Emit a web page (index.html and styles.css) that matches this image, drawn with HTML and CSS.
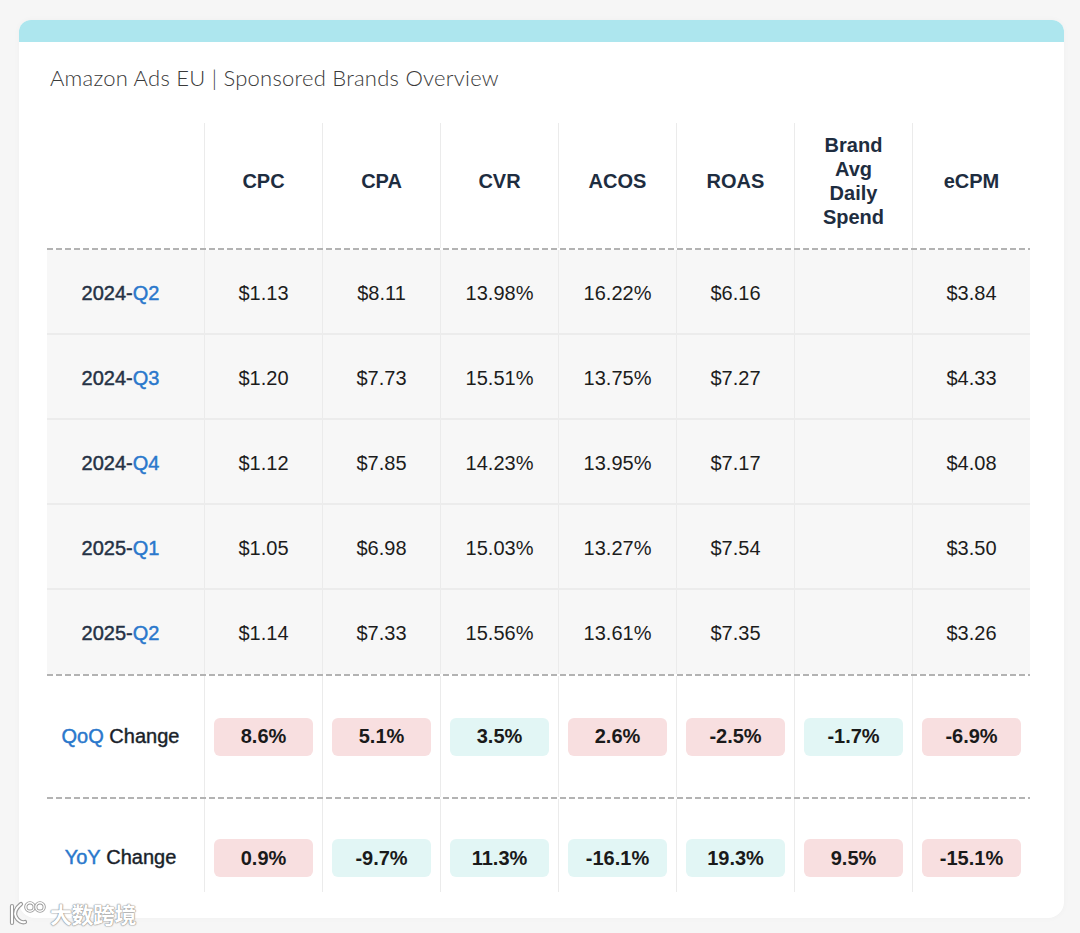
FILE: index.html
```html
<!DOCTYPE html>
<html lang="en">
<head>
<meta charset="utf-8">
<title>Amazon Ads EU | Sponsored Brands Overview</title>
<link rel="stylesheet" href="styles.css">
</head>
<body>
<div class="card">
  <div class="band"></div>
  <h1 class="title">Amazon Ads EU | Sponsored Brands Overview</h1>
  <div class="table">
    <div class="row head">
      <div class="cell first"></div>
      <div class="cell">CPC</div>
      <div class="cell">CPA</div>
      <div class="cell">CVR</div>
      <div class="cell">ACOS</div>
      <div class="cell">ROAS</div>
      <div class="cell multi">Brand<br>Avg<br>Daily<br>Spend</div>
      <div class="cell">eCPM</div>
    </div>
    <div class="dash"></div>
    <div class="row data">
      <div class="cell first label">2024-<span class="blue">Q2</span></div>
      <div class="cell">$1.13</div><div class="cell">$8.11</div><div class="cell">13.98%</div><div class="cell">16.22%</div><div class="cell">$6.16</div><div class="cell"></div><div class="cell">$3.84</div>
    </div>
    <div class="row data">
      <div class="cell first label">2024-<span class="blue">Q3</span></div>
      <div class="cell">$1.20</div><div class="cell">$7.73</div><div class="cell">15.51%</div><div class="cell">13.75%</div><div class="cell">$7.27</div><div class="cell"></div><div class="cell">$4.33</div>
    </div>
    <div class="row data">
      <div class="cell first label">2024-<span class="blue">Q4</span></div>
      <div class="cell">$1.12</div><div class="cell">$7.85</div><div class="cell">14.23%</div><div class="cell">13.95%</div><div class="cell">$7.17</div><div class="cell"></div><div class="cell">$4.08</div>
    </div>
    <div class="row data">
      <div class="cell first label">2025-<span class="blue">Q1</span></div>
      <div class="cell">$1.05</div><div class="cell">$6.98</div><div class="cell">15.03%</div><div class="cell">13.27%</div><div class="cell">$7.54</div><div class="cell"></div><div class="cell">$3.50</div>
    </div>
    <div class="row data last">
      <div class="cell first label">2025-<span class="blue">Q2</span></div>
      <div class="cell">$1.14</div><div class="cell">$7.33</div><div class="cell">15.56%</div><div class="cell">13.61%</div><div class="cell">$7.35</div><div class="cell"></div><div class="cell">$3.26</div>
    </div>
    <div class="dash"></div>
    <div class="row change qoq">
      <div class="cell first label"><span class="blue">QoQ</span>&nbsp;Change</div>
      <div class="cell"><span class="pill red">8.6%</span></div>
      <div class="cell"><span class="pill red">5.1%</span></div>
      <div class="cell"><span class="pill teal">3.5%</span></div>
      <div class="cell"><span class="pill red">2.6%</span></div>
      <div class="cell"><span class="pill red">-2.5%</span></div>
      <div class="cell"><span class="pill teal">-1.7%</span></div>
      <div class="cell"><span class="pill red">-6.9%</span></div>
    </div>
    <div class="dash"></div>
    <div class="row change yoy">
      <div class="cell first label"><span class="blue">YoY</span>&nbsp;Change</div>
      <div class="cell"><span class="pill red">0.9%</span></div>
      <div class="cell"><span class="pill teal">-9.7%</span></div>
      <div class="cell"><span class="pill teal">11.3%</span></div>
      <div class="cell"><span class="pill teal">-16.1%</span></div>
      <div class="cell"><span class="pill teal">19.3%</span></div>
      <div class="cell"><span class="pill red">9.5%</span></div>
      <div class="cell"><span class="pill red">-15.1%</span></div>
    </div>
  </div>
</div>
<div class="watermark">
  <svg class="wm-logo" width="40" height="28" viewBox="0 0 40 28">
    <g fill="none" stroke-linecap="round" stroke-linejoin="round">
      <path d="M5 7 L5 24 M14 5 C9 9 7 14 9 18 C11 22 15 24 18 23" stroke="#9a9a9a" stroke-width="4.2"/>
      <path d="M5 7 L5 24 M14 5 C9 9 7 14 9 18 C11 22 15 24 18 23" stroke="#ffffff" stroke-width="2"/>
      <circle cx="23" cy="8" r="4.2" stroke="#9a9a9a" stroke-width="3.2"/>
      <circle cx="23" cy="8" r="4.2" stroke="#ffffff" stroke-width="1.4"/>
      <circle cx="33" cy="8" r="4.2" stroke="#9a9a9a" stroke-width="3.2"/>
      <circle cx="33" cy="8" r="4.2" stroke="#ffffff" stroke-width="1.4"/>
    </g>
  </svg>
  <span class="wm-text">大数跨境</span>
</div>
</body>
</html>
```
FILE: styles.css
```css
html, body {
  margin: 0;
  padding: 0;
}
body {
  background: #f6f6f6;
  width: 1080px;
  height: 933px;
  overflow: hidden;
  position: relative;
  font-family: "Liberation Sans", Arial, sans-serif;
}
.card {
  margin: 20px 0 0 19px;
  width: 1045px;
  height: 898px;
  background: #ffffff;
  border-radius: 12px 12px 16px 16px;
  box-shadow: 0 0 6px rgba(0, 0, 0, 0.03);
  overflow: hidden;
}
.band {
  height: 22px;
  background: #ade6ee;
}
.title {
  margin: 22px 0 0 31px;
  font-family: "Lato", sans-serif;
  font-weight: 300;
  font-size: 22px;
  line-height: 28px;
  color: #3a3a3a;
  letter-spacing: 0.25px;
}
.table {
  margin: 31px 0 0 28px;
  width: 983px;
}
.row {
  display: grid;
  grid-template-columns: 157px repeat(7, 118px);
}
.cell {
  display: flex;
  align-items: center;
  justify-content: center;
  border-left: 1.5px solid #ebebeb;
  font-size: 20px;
  color: #1c1c1c;
  text-align: center;
}
.cell.first {
  border-left: none;
  padding-right: 10px;
}
.head {
  height: 125px;
}
.head .cell {
  font-weight: 700;
  color: #1e2d40;
  padding-bottom: 10px;
  line-height: 24px;
}
.dash {
  height: 2px;
  background-image: repeating-linear-gradient(to right, #b3b3b3 0 6px, transparent 6px 9px);
}
.data {
  height: 85px;
  background: #f7f7f7;
  box-sizing: border-box;
  border-bottom: 2px solid #ececec;
}
.data.last {
  height: 84px;
  border-bottom: none;
}
.data .cell {
  padding-top: 3px;
}
.label {
  color: #253245;
  -webkit-text-stroke: 0.45px #253245;
}
.blue {
  color: #2a78cc;
  -webkit-text-stroke: 0.45px #2a78cc;
}
.change .cell {
  color: #1a1a1a;
}
.qoq {
  height: 121px;
}
.yoy {
  height: 93px;
}
.yoy .cell {
  align-items: flex-start;
  padding-top: 40px;
}
.yoy .cell.first {
  padding-top: 47px;
}
.pill {
  display: flex;
  align-items: center;
  justify-content: center;
  width: 99px;
  height: 38px;
  border-radius: 6px;
  font-weight: 700;
  font-size: 20px;
  color: #1a1a1a;
}
.pill.red {
  background: #f8dfe0;
}
.pill.teal {
  background: #e2f6f5;
}
.watermark {
  position: absolute;
  left: 7px;
  top: 897px;
  display: flex;
  align-items: center;
  gap: 3px;
}
.wm-text {
  font-family: "Noto Sans CJK SC", sans-serif;
  font-weight: 700;
  font-size: 22px;
  color: #ffffff;
  text-shadow: 0 0 1px #8a8a8a, 0 0 1px #8a8a8a, 0 0 2px #a0a0a0;
  letter-spacing: -0.5px;
}
```
